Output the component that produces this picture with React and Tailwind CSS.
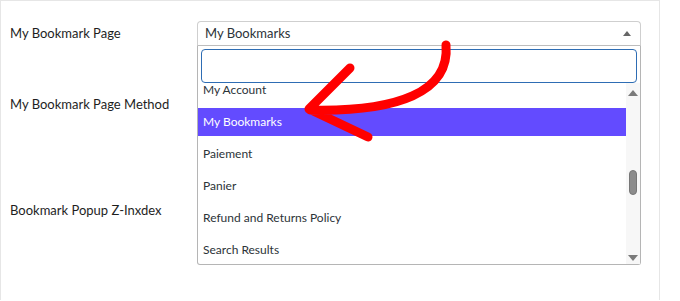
import React from "react";

const options = ["My Account", "My Bookmarks", "Paiement", "Panier", "Refund and Returns Policy", "Search Results"];

export default function App() {
  return (
    <div className="relative w-[680px] h-[301px] overflow-hidden bg-white">
      <div className="flex h-[300px] w-[660px] border-t border-l border-r border-[#e6e6e6]">
        <div className="w-[196px] flex flex-col pl-[9px] text-[13px] leading-[18px] text-[#1e1e1e] [font-family:Lato,'Noto_Sans',sans-serif]">
          <div className="mt-[23px]">My Bookmark Page</div>
          <div className="mt-[53px]">My Bookmark Page Method</div>
          <div className="mt-[88px]">Bookmark Popup Z-Inxdex</div>
        </div>
        <div className="pt-[20px]">
          <div className="relative w-[444px]">
            <div className="flex items-center justify-between h-[25px] rounded-t-[4px] border border-[#cfcfcf] border-b-[#bdbdbd] pl-[7px] pr-[9px] text-[13px] text-[#2c3338] [font-family:Lato,'Noto_Sans',sans-serif]">
              <span>My Bookmarks</span>
              <svg width="8" height="5" viewBox="0 0 8 5"><path d="M0 5 L4 0 L8 5 Z" fill="#666" /></svg>
            </div>
            <div className="absolute left-0 top-full w-[444px] h-[219px] bg-white border border-t-0 border-[#b5b5b5] rounded-b-[3px] flex flex-col">
              <div className="px-[3px] pt-[3px]">
                <div className="h-[34px] rounded-[4px] border border-[#2e6db4]" />
              </div>
              <div className="flex flex-1 overflow-hidden">
                <div className="flex-1 overflow-hidden [font-family:Lato,'Noto_Sans',sans-serif] text-[12px] text-[#2c3338]">
                  <div className="mt-[-7px] flex flex-col gap-[4px]">
                    {options.map((o) => (
                      <div
                        key={o}
                        className={
                          o === "My Bookmarks"
                            ? "h-[28px] flex items-center pl-[5px] bg-[#634bff] text-white"
                            : "h-[28px] flex items-center pl-[5px]"
                        }
                      >
                        {o}
                      </div>
                    ))}
                  </div>
                </div>
                <div className="w-[14px] bg-[#f7f7f7] flex flex-col items-center pt-[7px] pb-[3px]">
                  <svg width="10" height="6" viewBox="0 0 10 6"><path d="M0 6 L5 0 L10 6 Z" fill="#7a7a7a" /></svg>
                  <div className="mt-[74px] w-[8px] h-[25px] rounded-[4px] bg-[#8c8c8c] border border-[#777]" />
                  <div className="flex-1" />
                  <svg width="10" height="6" viewBox="0 0 10 6"><path d="M0 0 L5 6 L10 0 Z" fill="#7a7a7a" /></svg>
                </div>
              </div>
            </div>
          </div>
        </div>
      </div>
      <svg className="absolute left-0 top-0 pointer-events-none" width="680" height="301" viewBox="0 0 680 301">
        <path
          d="M446 45 C450 92 398 112 310 110 M350 68 L309 109 L368 137"
          fill="none"
          stroke="#ff0000"
          strokeWidth="9"
          strokeLinecap="round"
          strokeLinejoin="round"
        />
      </svg>
    </div>
  );
}
